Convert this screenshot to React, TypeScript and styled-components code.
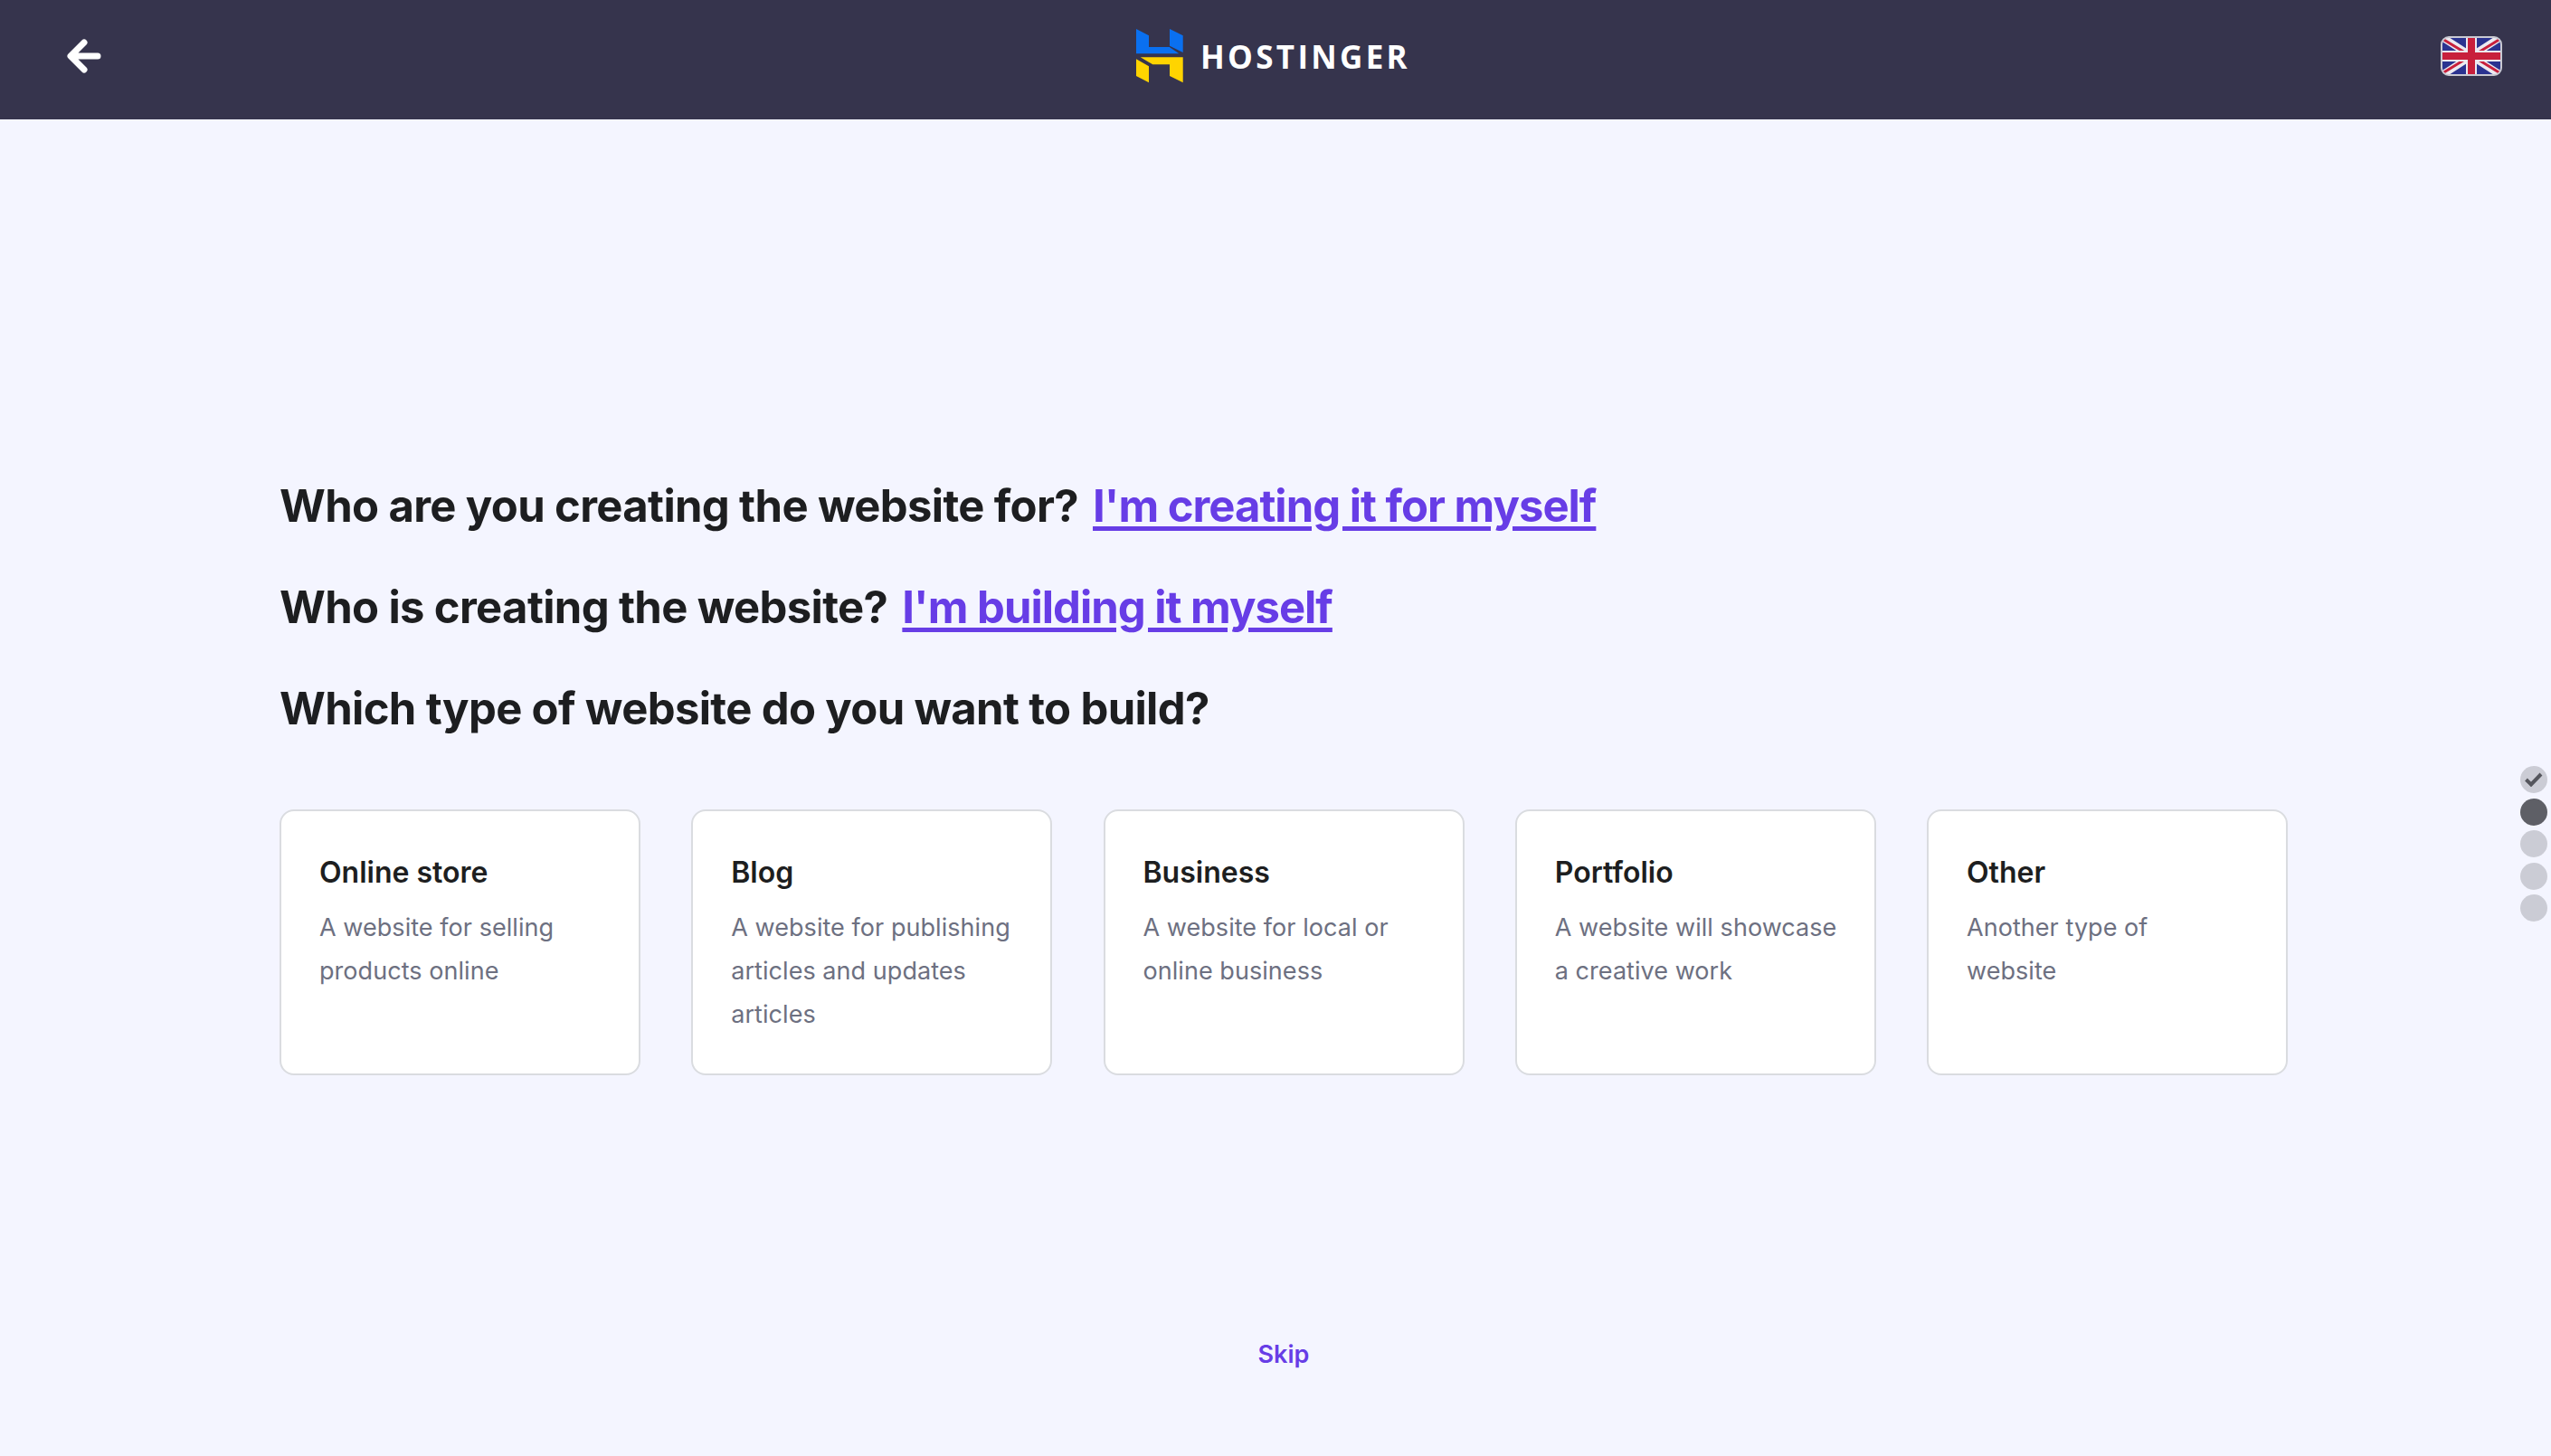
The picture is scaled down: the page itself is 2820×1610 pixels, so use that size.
import React from "react";
import styled, { createGlobalStyle } from "styled-components";

const GlobalStyle = createGlobalStyle`
  html, body {
    margin: 0;
    padding: 0;
    background: #f4f5ff;
    font-family: Inter, "Liberation Sans", sans-serif;
    color: #1d1e20;
  }
`;

const Page = styled.div`
  position: relative;
  width: 2820px;
  height: 1610px;
  overflow: hidden;
`;

const Header = styled.header`
  height: 132px;
  background: #36344d;
  display: flex;
  align-items: center;
  justify-content: space-between;
  padding: 0 54px 8px 74px;
  box-sizing: border-box;
`;

const BackButton = styled.button`
  display: flex;
  padding: 0;
  border: 0;
  background: none;
`;

const Logo = styled.div`
  display: flex;
  align-items: center;
  gap: 19px;
  margin-left: 5px;
`;

const LogoText = styled.span`
  font-family: "Open Sans", sans-serif;
  font-size: 35px;
  font-weight: 700;
  letter-spacing: 3.3px;
  color: #fff;
`;

const Main = styled.main`
  padding: 396px 291px 0 309px;
`;

const Question = styled.h2`
  margin: 0 0 48px;
  font-size: 49px;
  line-height: 64px;
  font-weight: 650;
  letter-spacing: -0.65px;
  color: #1d1e20;
  display: flex;
  gap: 16px;
`;

const Answer = styled.a`
  color: #673de6;
  letter-spacing: -1px;
  text-decoration: underline;
  text-decoration-thickness: 5px;
  text-underline-offset: 5px;
`;

const Cards = styled.div`
  display: grid;
  grid-template-columns: repeat(5, 399px);
  gap: 56.25px;
  margin-top: 79px;
`;

const Card = styled.div`
  height: 294px;
  box-sizing: border-box;
  padding: 48px 42px 0;
  background: #fff;
  border: 2px solid #dadce0;
  border-radius: 16px;
`;

const CardTitle = styled.div`
  font-size: 32px;
  line-height: 40px;
  font-weight: 600;
  color: #1d1e20;
`;

const CardText = styled.div`
  margin-top: 17px;
  font-size: 27px;
  line-height: 48px;
  letter-spacing: 0.05px;
  white-space: nowrap;
  color: #6d7081;
`;

const Skip = styled.a`
  display: block;
  margin-top: 291px;
  text-align: center;
  font-size: 27px;
  line-height: 36px;
  font-weight: 600;
  color: #673de6;
`;

const Steps = styled.div`
  position: absolute;
  right: 4px;
  top: 847px;
  display: flex;
  flex-direction: column;
  gap: 5.5px;
`;

const Step = styled.div<{ $active?: boolean }>`
  width: 30px;
  height: 30px;
  border-radius: 50%;
  background: ${(p) => (p.$active ? "#5e5f66" : "#cbccd5")};
  display: flex;
  align-items: center;
  justify-content: center;
`;

const cards = [
  { title: "Online store", lines: ["A website for selling", "products online"] },
  { title: "Blog", lines: ["A website for publishing", "articles and updates", "articles"] },
  { title: "Business", lines: ["A website for local or", "online business"] },
  { title: "Portfolio", lines: ["A website will showcase", "a creative work"] },
  { title: "Other", lines: ["Another type of", "website"] },
];

const HostingerLogo = () => (
  <svg width="52" height="60" viewBox="0 0 52 60">
    <path fill="#0a70f0" d="M0 0l14 7.300V20h22.700l10.600 7.300H0zM37 0l14.700 7.300V26L37 18.700z" />
    <path fill="#ffd400" d="M4.700 31.300h47v28L37 52V39.300H18.300zM0 33.300l14 8v18L0 52z" />
  </svg>
);

const Flag = () => (
  <svg width="68" height="44" viewBox="0 0 68 44">
    <defs>
      <clipPath id="flag-clip">
        <rect x="1" y="1" width="66" height="42" rx="8" />
      </clipPath>
    </defs>
    <g clipPath="url(#flag-clip)">
      <rect width="68" height="44" fill="#2b3390" />
      <path d="M0 0L68 44M68 0L0 44" stroke="#eceaf0" strokeWidth="8" />
      <path d="M2 3L30 20M66 3L40 19M2 41L28 25M66 41L40 25" stroke="#c8203c" strokeWidth="3" />
      <path d="M34 0V44M0 22H68" stroke="#eceaf0" strokeWidth="12" />
      <path d="M34 0V44M0 22H68" stroke="#c8203c" strokeWidth="8" />
    </g>
    <rect x="1" y="1" width="66" height="42" rx="8" fill="none" stroke="#c9c9d2" strokeWidth="2" />
  </svg>
);

export default function App() {
  return (
    <Page>
      <GlobalStyle />
      <Header>
        <BackButton>
          <svg width="38" height="38" viewBox="0 0 38 38" fill="none" stroke="#fff" strokeWidth="7" strokeLinecap="round" strokeLinejoin="round">
            <path d="M34 19H5M19 4L4 19l15 15" />
          </svg>
        </BackButton>
        <Logo>
          <HostingerLogo />
          <LogoText>HOSTINGER</LogoText>
        </Logo>
        <Flag />
      </Header>
      <Main>
        <Question>
          Who are you creating the website for? <Answer>I'm creating it for myself</Answer>
        </Question>
        <Question>
          Who is creating the website? <Answer>I'm building it myself</Answer>
        </Question>
        <Question>Which type of website do you want to build?</Question>
        <Cards>
          {cards.map((c) => (
            <Card key={c.title}>
              <CardTitle>{c.title}</CardTitle>
              <CardText>
                {c.lines.map((l) => (
                  <div key={l}>{l}</div>
                ))}
              </CardText>
            </Card>
          ))}
        </Cards>
        <Skip>Skip</Skip>
      </Main>
      <Steps>
        <Step>
          <svg width="20" height="16" viewBox="0 0 20 16" fill="none" stroke="#55565d" strokeWidth="4">
            <path d="M1.500 8l5.500 5.500L18 2" />
          </svg>
        </Step>
        <Step $active />
        <Step />
        <Step />
        <Step />
      </Steps>
    </Page>
  );
}
